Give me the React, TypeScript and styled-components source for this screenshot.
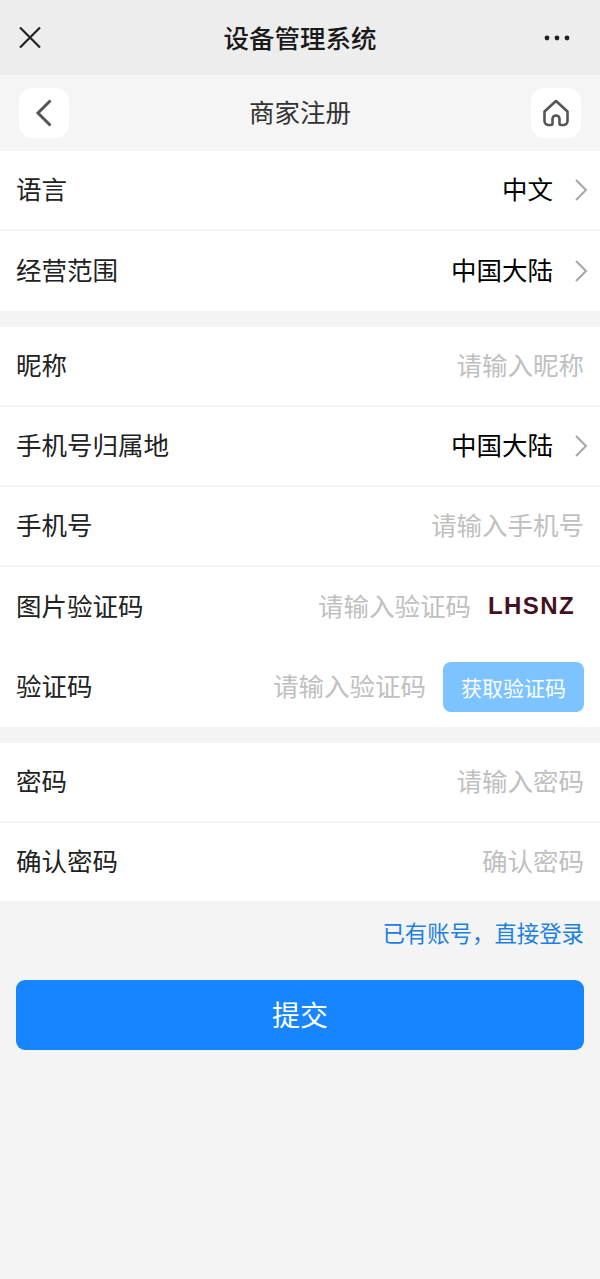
import React from "react";
import styled, { createGlobalStyle } from "styled-components";

const Global = createGlobalStyle`
  html, body { margin: 0; padding: 0; background: #f4f4f4; }
  body { font-family: "Noto Sans CJK SC", "Liberation Sans", sans-serif; }
`;
const Page = styled.div`
  width: 600px; height: 1279px; background: #f4f4f4; overflow: hidden;
`;
const TitleBar = styled.header`
  height: 75px; background: #ededed; display: flex; align-items: center; justify-content: space-between; padding: 0 16px; box-sizing: border-box;
`;
const CloseIcon = styled.svg`width: 30px; height: 30px; display: block; color: #222; margin-right: 12px;`;
const MoreIcon = styled.svg`width: 30px; height: 8px; display: block; color: #222; margin-right: 12px;`;
const Title = styled.h1`
  margin: 0 0 2px 0; font-size: 25.5px; font-weight: 500; color: #1a1a1a; line-height: 36px;
`;
const NavBar = styled.nav`
  height: 76px; background: #f5f5f5; display: flex; align-items: center; justify-content: space-between; padding: 0 19px; box-sizing: border-box;
`;
const NavButton = styled.div`
  width: 50px; height: 50px; background: #fff; border-radius: 14px; display: flex; align-items: center; justify-content: center;
`;
const NavTitle = styled.div`font-size: 25.5px; color: #333; line-height: 36px; margin-bottom: 5px;`;
const Section = styled.section`
  background: #fff;
  & + & { margin-top: 16px; }
`;
const Row = styled.div<{ $line?: boolean; $h?: number }>`
  height: ${(p) => p.$h ?? 80}px; box-sizing: border-box; display: flex; align-items: center; padding: 0 16px;
  ${(p) => (p.$line ? "border-bottom: 2px solid #f5f5f5;" : "")}
`;
const Label = styled.div`font-size: 25.5px; color: #222; flex: 1; margin-bottom: 6px;`;
const Value = styled.div`font-size: 25.5px; color: #000; margin-bottom: 6px;`;
const Placeholder = styled.div`font-size: 25.5px; color: #c0c0c0; margin-bottom: 6px;`;
const Chevron = styled.svg`width: 14px; height: 24px; margin-left: 21px; margin-right: -4px; color: #a6a6a6; display: block;`;
const Captcha = styled.div`
  font-family: "Liberation Sans", sans-serif; font-weight: 700; font-size: 24px; letter-spacing: 1.4px; color: #45101f; margin-left: 17px; margin-right: 9px; margin-bottom: 2px; width: 87px; white-space: nowrap;
`;
const CodeButton = styled.div`
  width: 141px; height: 50px; margin-left: 17px; border-radius: 8px; background: #7cc3ff; color: #fff; font-size: 21px; display: flex; align-items: center; justify-content: center;
`;
const LinkRow = styled.div`
  height: 64px; display: flex; align-items: center; justify-content: flex-end; padding: 0 16px;
`;
const LoginLink = styled.span`font-size: 22.4px; color: #1d7fe0; margin-bottom: 2px;`;
const Submit = styled.button`
  display: block; width: 568px; height: 70px; margin: 15px 16px 0; padding: 0 0 2px; border: 0; border-radius: 9px; background: #1785ff; color: #fff; font-size: 28px; font-family: inherit;
`;

const Arrow = () => (
  <Chevron viewBox="0 0 14 24" fill="none" stroke="currentColor" strokeWidth="2">
    <path d="M2 2l10 10L2 22" />
  </Chevron>
);

export default function App() {
  return (
    <Page>
      <Global />
      <TitleBar>
        <CloseIcon viewBox="0 0 30 30" fill="none" stroke="currentColor" strokeWidth="2.2">
          <path d="M4 4.500l20 20M24 4.500l-20 20" />
        </CloseIcon>
        <Title>设备管理系统</Title>
        <MoreIcon viewBox="0 0 30 8" fill="currentColor">
          <circle cx="5" cy="4" r="2.400" />
          <circle cx="15" cy="4" r="2.400" />
          <circle cx="25" cy="4" r="2.400" />
        </MoreIcon>
      </TitleBar>
      <NavBar>
        <NavButton>
          <svg width="18" height="28" viewBox="0 0 18 28" fill="none" stroke="#555" strokeWidth="3">
            <path d="M15.500 1.500L3 14l12.500 12.500" />
          </svg>
        </NavButton>
        <NavTitle>商家注册</NavTitle>
        <NavButton>
          <svg width="28" height="28" viewBox="0 0 28 28" fill="none" stroke="#555" strokeWidth="2.600" strokeLinejoin="round">
            <path d="M14 2L2.500 12.500V22a4 4 0 004 4h2.500a1.500 1.500 0 001.500-1.500V20a3.500 3.500 0 017 0v4.500a1.500 1.500 0 001.500 1.500h2.500a4 4 0 004-4V12.500z" />
          </svg>
        </NavButton>
      </NavBar>
      <Section>
        <Row $line><Label>语言</Label><Value>中文</Value><Arrow /></Row>
        <Row><Label>经营范围</Label><Value>中国大陆</Value><Arrow /></Row>
      </Section>
      <Section>
        <Row $line><Label>昵称</Label><Placeholder>请输入昵称</Placeholder></Row>
        <Row $line><Label>手机号归属地</Label><Value>中国大陆</Value><Arrow /></Row>
        <Row $line><Label>手机号</Label><Placeholder>请输入手机号</Placeholder></Row>
        <Row><Label>图片验证码</Label><Placeholder>请输入验证码</Placeholder><Captcha>LHSNZ</Captcha></Row>
        <Row><Label>验证码</Label><Placeholder>请输入验证码</Placeholder><CodeButton>获取验证码</CodeButton></Row>
      </Section>
      <Section>
        <Row $line><Label>密码</Label><Placeholder>请输入密码</Placeholder></Row>
        <Row $h={78}><Label>确认密码</Label><Placeholder>确认密码</Placeholder></Row>
      </Section>
      <LinkRow><LoginLink>已有账号，直接登录</LoginLink></LinkRow>
      <Submit>提交</Submit>
    </Page>
  );
}
